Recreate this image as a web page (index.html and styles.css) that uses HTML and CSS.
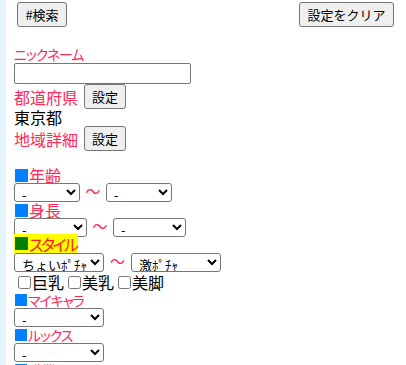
FILE: index.html
```html
<!DOCTYPE html>
<html lang="ja">
<head>
<meta charset="utf-8">
<link rel="stylesheet" href="styles.css">
</head>
<body>
<div class="page">
  <div class="topbar">
    <button class="btn btn-search">#検索</button>
    <button class="btn btn-clear">設定をクリア</button>
  </div>
  <div class="form">
    <div class="small-label kana">ニックネーム</div>
    <input class="text-input" type="text">
    <div class="row row-btn"><span class="big-label">都道府県</span><button class="btn btn-set">設定</button></div>
    <div class="value">東京都</div>
    <div class="row row-btn"><span class="big-label">地域詳細</span><button class="btn btn-set">設定</button></div>
    <div class="spacer"></div>
    <div class="head"><span class="sq blue"></span><span class="big-label">年齢</span></div>
    <div class="row sel-row">
      <select class="sel w66"><option>-</option></select><span class="tilde">〜</span><select class="sel w66"><option>-</option></select>
    </div>
    <div class="head"><span class="sq blue"></span><span class="big-label">身長</span></div>
    <div class="row sel-row">
      <select class="sel w73"><option>-</option></select><span class="tilde">〜</span><select class="sel w73"><option>-</option></select>
    </div>
    <div class="head"><span class="hl"><span class="sq green"></span><span class="big-label red kana-big">スタイル</span></span></div>
    <div class="row sel-row">
      <select class="sel w90"><option>ちょいﾎﾟﾁｬ</option></select><span class="tilde wide">〜</span><select class="sel w90"><option>激ﾎﾟﾁｬ</option></select>
    </div>
    <div class="checks">
      <label class="chk"><input type="checkbox">巨乳</label><label class="chk"><input type="checkbox">美乳</label><label class="chk"><input type="checkbox">美脚</label>
    </div>
    <div class="head small"><span class="sq blue sm"></span><span class="small-label kana">マイキャラ</span></div>
    <div class="row sel-row"><select class="sel w90"><option>-</option></select></div>
    <div class="head small"><span class="sq blue sm"></span><span class="small-label kana">ルックス</span></div>
    <div class="row sel-row"><select class="sel w90"><option>-</option></select></div>
    <div class="head small"><span class="sq blue sm"></span><span class="small-label">職業</span></div>
  </div>
</div>
</body>
</html>
```
FILE: styles.css
```css
html, body {
  margin: 0;
  padding: 0;
  background: #fff;
}
body {
  font-family: "Noto Sans CJK JP", "Liberation Sans", sans-serif;
  width: 406px;
  height: 365px;
  overflow: hidden;
}
.page {
  border-left: 6px solid #e3f4fc;
  min-height: 365px;
  box-sizing: border-box;
  padding-left: 8px;
}
.topbar {
  display: flex;
  justify-content: space-between;
  padding: 2px 12px 0 3px;
  height: 25px;
}
.btn {
  font-family: "Noto Sans CJK JP", "Liberation Sans", sans-serif;
  font-size: 13px;
  line-height: 15px;
  background: #efefef;
  border: 1px solid #767676;
  border-radius: 3px;
  color: #000;
  height: 25px;
  margin: 0;
  padding: 0;
}
.btn-search { width: 50px; }
.btn-clear { width: 95px; }
.btn-set { width: 42px; margin-left: 6px; }
.form {
  padding-top: 19px;
}
.kana {
  font-feature-settings: "palt";
  letter-spacing: -1.2px;
}
.kana-big {
  font-feature-settings: "palt";
  letter-spacing: -2.5px;
}
.small-label {
  color: #ff2a5a;
  font-size: 14px;
  line-height: 17px;
  display: block;
}
.form > .small-label { height: 17px; }
.head.small .small-label { display: inline-block; line-height: 16px; }
.text-input {
  display: block;
  box-sizing: border-box;
  width: 177px;
  height: 21px;
  border: 1px solid #767676;
  border-radius: 2px;
  margin: 0;
  padding: 0 2px;
}
.row {
  display: flex;
  align-items: center;
}
.row-btn {
  height: 25px;
}
.big-label {
  color: #ff2a5a;
  font-size: 16px;
  line-height: 16px;
}
.big-label.red { color: #ff1a1a; }
.value {
  font-size: 16px;
  line-height: 16px;
  height: 17px;
  color: #000;
}
.spacer { height: 16px; }
.head {
  display: flex;
  align-items: center;
  height: 16px;
}
.sq {
  display: inline-block;
  width: 13px;
  height: 13px;
  margin: 0 1px 0 1px;
}
.sq.sm { width: 12px; height: 12px; }
.blue { background: #0080ff; }
.green { background: #008000; }
.hl {
  background: #ffff00;
  display: inline-flex;
  align-items: center;
  height: 19px;
  margin-top: -3px;
  padding-right: 2px;
}
.sel-row {
  height: 19px;
}
.sel {
  box-sizing: border-box;
  height: 19px;
  font-family: "Noto Sans CJK JP", "Liberation Sans", sans-serif;
  font-size: 13px;
  border: 1px solid #767676;
  border-radius: 3px;
  background: #fff;
  color: #000;
  margin: 0;
  padding: 0 0 0 3px;
}
.w66 { width: 66px; }
.w73 { width: 73px; }
.w90 { width: 90px; }
.tilde {
  color: #ff2a5a;
  font-size: 15px;
  line-height: 15px;
  width: 26px;
  text-align: center;
  align-self: flex-start;
}
.tilde.wide { width: 27px; }
.checks {
  display: flex;
  height: 20px;
  align-items: center;
  font-size: 16px;
  line-height: 16px;
}
.chk {
  display: inline-flex;
  align-items: center;
}
.chk input {
  width: 13px;
  height: 13px;
  margin: 0 1px 0 4px;
}
```
